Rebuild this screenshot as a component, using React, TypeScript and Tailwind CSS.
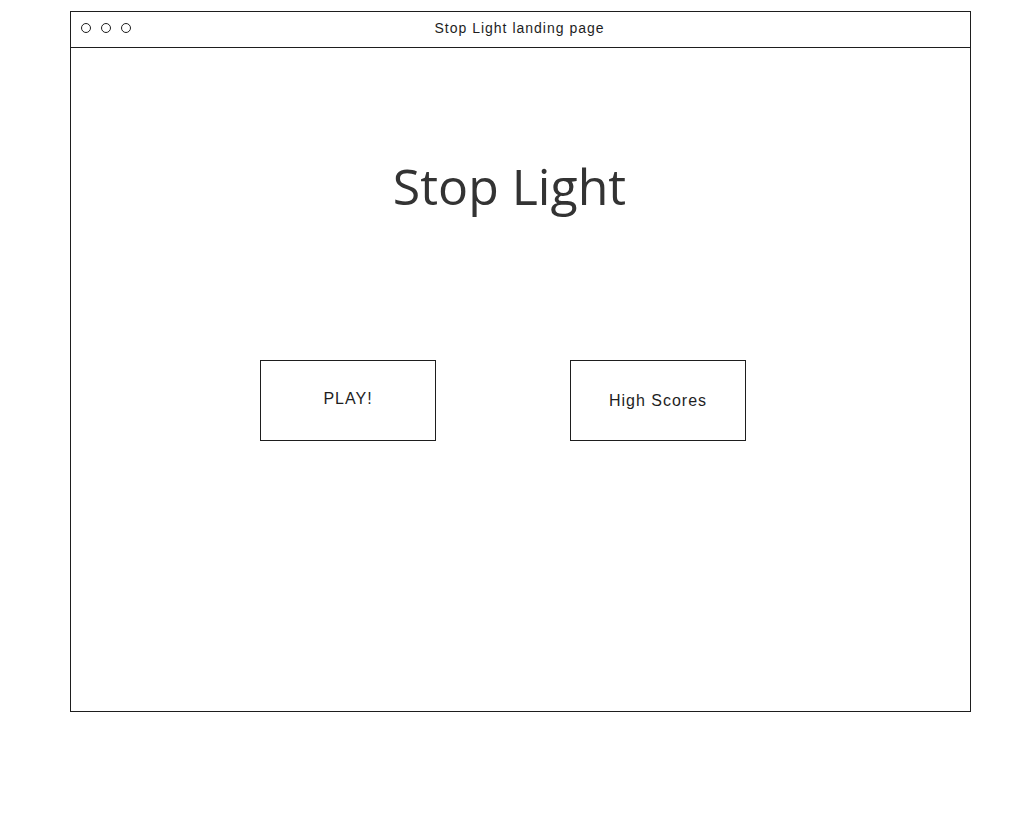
export default function App() {
  return (
    <div className="min-h-screen w-full bg-white pt-[11px] pl-[70px]">
      {/* Browser window wireframe */}
      <div className="w-[901px] h-[701px] border border-[#1e1e1e] flex flex-col">
        {/* Title bar */}
        <div className="h-[36px] border-b border-[#1e1e1e] grid grid-cols-[1fr_auto_1fr] items-center">
          <div className="flex items-center gap-[10px] pl-[10px] pb-[3px]">
            <span className="w-[10px] h-[10px] rounded-full border border-[#1e1e1e]" />
            <span className="w-[10px] h-[10px] rounded-full border border-[#1e1e1e]" />
            <span className="w-[10px] h-[10px] rounded-full border border-[#1e1e1e]" />
          </div>
          <div className="text-[14px] tracking-[1px] text-[#1e1e1e] font-['Liberation_Sans',sans-serif] pb-[2px] pr-[2px]">
            Stop Light landing page
          </div>
          <div />
        </div>

        {/* Page body */}
        <div className="flex-1 flex flex-col">
          <div className="mt-[113px] flex justify-center pr-[22px]">
            <h1 className="text-[50px] leading-none text-[#333333] font-['Open_Sans',sans-serif]">
              Stop Light
            </h1>
          </div>

          <div className="mt-[149px] flex justify-center gap-[134px] pr-[35px]">
            <button className="w-[176px] h-[81px] border border-[#1e1e1e] text-[16px] tracking-[1px] text-[#1e1e1e] font-['Liberation_Sans',sans-serif] pb-[3px]">
              PLAY!
            </button>
            <button className="w-[176px] h-[81px] border border-[#1e1e1e] text-[16px] tracking-[1px] text-[#1e1e1e] font-['Liberation_Sans',sans-serif]">
              High Scores
            </button>
          </div>
        </div>
      </div>
    </div>
  );
}
